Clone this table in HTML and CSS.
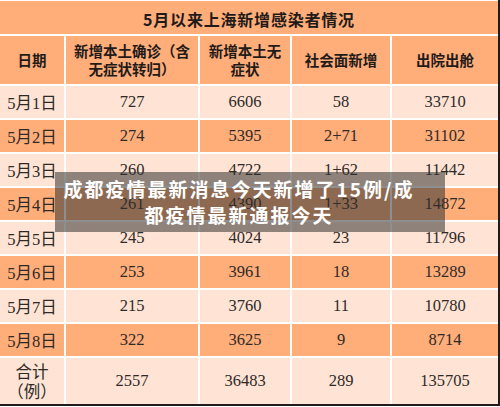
FILE: index.html
```html
<!DOCTYPE html>
<html lang="zh-CN">

<head>
    <meta charset="UTF-8" />
    <meta name="viewport" content="width=device-width, initial-scale=1.0" />
    <title>成都疫情最新消息</title>
    <link rel="stylesheet" href="styles.css">
</head>

<body>
    <div class="frame">
        <div class="sheet">
            <div class="cell title">5月以来上海新增感染者情况</div>

            <div class="cell head">日期</div>
            <div class="cell head">新增本土确诊（含<br>无症状转归）</div>
            <div class="cell head">新增本土无<br>症状</div>
            <div class="cell head">社会面新增</div>
            <div class="cell head">出院出舱</div>

            <div class="cell light">5月1日</div>
            <div class="cell light">727</div>
            <div class="cell light">6606</div>
            <div class="cell light">58</div>
            <div class="cell light">33710</div>

            <div class="cell dark">5月2日</div>
            <div class="cell dark">274</div>
            <div class="cell dark">5395</div>
            <div class="cell dark">2+71</div>
            <div class="cell dark">31102</div>

            <div class="cell light">5月3日</div>
            <div class="cell light">260</div>
            <div class="cell light">4722</div>
            <div class="cell light">1+62</div>
            <div class="cell light">11442</div>

            <div class="cell dark">5月4日</div>
            <div class="cell dark">261</div>
            <div class="cell dark">4390</div>
            <div class="cell dark">1+33</div>
            <div class="cell dark">14872</div>

            <div class="cell light">5月5日</div>
            <div class="cell light">245</div>
            <div class="cell light">4024</div>
            <div class="cell light">23</div>
            <div class="cell light">11796</div>

            <div class="cell dark">5月6日</div>
            <div class="cell dark">253</div>
            <div class="cell dark">3961</div>
            <div class="cell dark">18</div>
            <div class="cell dark">13289</div>

            <div class="cell light">5月7日</div>
            <div class="cell light">215</div>
            <div class="cell light">3760</div>
            <div class="cell light">11</div>
            <div class="cell light">10780</div>

            <div class="cell dark">5月8日</div>
            <div class="cell dark">322</div>
            <div class="cell dark">3625</div>
            <div class="cell dark">9</div>
            <div class="cell dark">8714</div>

            <div class="cell light total">合计<br>（例）</div>
            <div class="cell light">2557</div>
            <div class="cell light">36483</div>
            <div class="cell light">289</div>
            <div class="cell light">135705</div>
        </div>

        <div class="caption">成都疫情最新消息今天新增了15例/成<br>都疫情最新通报今天</div>
    </div>
</body>

</html>
```

FILE: styles.css
```css
:root{
    --orange: #ffad79;
    --pale: #ffe4d5;
    --line: #ffffff;
    --ink: #2e2a28;
}

body{
    margin: 0;
    background-color: #fff;
    font-family: "Noto Sans CJK SC", sans-serif;
}
.frame{
    position: relative;
    width: 500px;
    height: 406px;
    box-sizing: border-box;
    padding-top: 1px;
    background-color: var(--line);
    border-right: 2px solid #1c1c1c;
    border-bottom: 2px solid #1c1c1c;
    overflow: hidden;
}
.sheet{
    display: grid;
    grid-template-columns: 64px 132px 90px 98px 106px;
    grid-template-rows: 33px 48px repeat(8, 32px) 46px;
    gap: 2px;
}
.cell{
    display: flex;
    align-items: center;
    justify-content: center;
    text-align: center;
    color: var(--ink);
    font-family: "Liberation Serif", "Noto Sans CJK SC", serif;
    font-size: 16.5px;
}
.title{
    grid-column: 1 / -1;
    background-color: var(--orange);
    font-family: "Noto Sans CJK SC", sans-serif;
    font-weight: bold;
    font-size: 16px;
    letter-spacing: 0.8px;
    color: #1f1b19;
    padding-top: 2px;
}
.head{
    background-color: var(--orange);
    font-family: "Noto Sans CJK SC", sans-serif;
    font-weight: bold;
    font-size: 14.5px;
    line-height: 18px;
    color: #1f1b19;
}
.light{
    background-color: var(--pale);
}
.dark{
    background-color: var(--orange);
}
.total{
    line-height: 20px;
    padding-top: 3px;
}
.caption{
    position: absolute;
    left: 55px;
    top: 172px;
    width: 390px;
    height: 60px;
    box-sizing: border-box;
    padding: 4px 22px 4px 0;
    background-color: rgba(50, 50, 50, 0.55);
    color: #fff;
    text-align: center;
    font-weight: bold;
    font-size: 19px;
    line-height: 26px;
    letter-spacing: 2px;
}
```
